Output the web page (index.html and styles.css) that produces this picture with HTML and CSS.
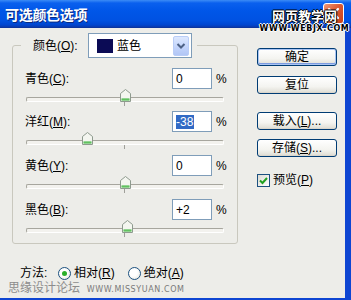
FILE: index.html
```html
<!DOCTYPE html>
<html lang="zh">
<head>
    <meta charset="UTF-8">
    <title>可选颜色选项</title>
    <link rel="stylesheet" href="styles.css">
</head>
<body>
<div class="window">
    <div class="titlebar">
        <span class="title">可选颜色选项</span>
        <span class="close-btn">
            <svg width="21" height="21" viewBox="0 0 21 21"><path d="M6 6 L15 15 M15 6 L6 15" stroke="#fff" stroke-width="2.2" stroke-linecap="round"/></svg>
        </span>
        <div class="site-mark">
            <span class="site-cn">网页教学网</span>
            <span class="site-en">WWW.WEBJX.COM</span>
        </div>
    </div>

    <div class="frame">
        <div class="main">
            <fieldset class="group">
                <legend class="color-pick">
                    <span class="pick-label">颜色(<u>O</u>):</span>
                    <span class="select">
                        <span class="swatch"></span>
                        <span class="select-text">蓝色</span>
                        <span class="drop">
                            <svg width="10" height="8" viewBox="0 0 10 8"><path d="M1.5 2 L5 5.5 L8.5 2" fill="none" stroke="#4D6185" stroke-width="2"/></svg>
                        </span>
                    </span>
                </legend>

                <div class="channel">
                    <div class="row">
                        <span class="label">青色(<u>C</u>):</span>
                        <span class="field">0</span>
                        <span class="pct">%</span>
                    </div>
                    <div class="slider">
                        <span class="track"></span>
                        <span class="tick"></span>
                        <span class="thumb" style="left: 95px"></span>
                    </div>
                </div>

                <div class="channel">
                    <div class="row">
                        <span class="label">洋红(<u>M</u>):</span>
                        <span class="field"><span class="selected">-38</span></span>
                        <span class="pct">%</span>
                    </div>
                    <div class="slider">
                        <span class="track"></span>
                        <span class="tick"></span>
                        <span class="thumb" style="left: 57px"></span>
                    </div>
                </div>

                <div class="channel">
                    <div class="row">
                        <span class="label">黄色(<u>Y</u>):</span>
                        <span class="field">0</span>
                        <span class="pct">%</span>
                    </div>
                    <div class="slider">
                        <span class="track"></span>
                        <span class="tick"></span>
                        <span class="thumb" style="left: 95px"></span>
                    </div>
                </div>

                <div class="channel">
                    <div class="row">
                        <span class="label">黑色(<u>B</u>):</span>
                        <span class="field">+2</span>
                        <span class="pct">%</span>
                    </div>
                    <div class="slider">
                        <span class="track"></span>
                        <span class="tick"></span>
                        <span class="thumb" style="left: 97px"></span>
                    </div>
                </div>
            </fieldset>

            <div class="method">
                <span class="method-label">方法:</span>
                <span class="radio on"></span>
                <span class="radio-text">相对(<u>R</u>)</span>
                <span class="radio second"></span>
                <span class="radio-text">绝对(<u>A</u>)</span>
            </div>

            <div class="credit">思缘设计论坛 <span class="credit-en">WWW.MISSYUAN.COM</span></div>
        </div>

        <div class="side">
            <button class="btn default">确定</button>
            <button class="btn reset">复位</button>
            <button class="btn load">载入(<u>L</u>)...</button>
            <button class="btn save">存储(<u>S</u>)...</button>
            <label class="check">
                <span class="box">
                    <svg width="11" height="11" viewBox="0 0 11 11"><path d="M2 5.5 L4.5 8 L9 3" fill="none" stroke="#21A121" stroke-width="2"/></svg>
                </span>
                <span>预览(<u>P</u>)</span>
            </label>
        </div>
    </div>
</div>
</body>
</html>
```

FILE: styles.css
```css
/* page */
body {
    margin: 0;
    font-family: "Liberation Sans", "Noto Sans CJK SC", sans-serif;
    font-size: 12px;
    color: #000;
}

u {
    text-decoration: underline;
    text-underline-offset: 1px;
}

/* window */
.window {
    width: 351px;
    height: 300px;
    display: flex;
    flex-direction: column;
    background: #EDEDE9;
    overflow: hidden;
}

/* title bar */
.titlebar {
    position: relative;
    height: 27px;
    flex-shrink: 0;
    display: flex;
    align-items: center;
    padding-left: 5px;
    background: linear-gradient(to bottom, #3C8CF6 0, #0A60EE 3px, #0056E8 40%, #0052E2 75%, #0046D0 92%, #0A3AAE 100%);
    border-bottom: 1px solid #0B35A0;
}

.title {
    color: #fff;
    font-family: "Noto Sans CJK SC", sans-serif;
    font-weight: bold;
    font-size: 14px;
    letter-spacing: -0.3px;
    text-shadow: 1px 1px 0 #0A2A80;
}

.close-btn {
    position: absolute;
    right: 7px;
    top: 3px;
    width: 21px;
    height: 21px;
    box-sizing: border-box;
    border: 1px solid #fff;
    border-radius: 3px;
    background: linear-gradient(135deg, #F09A78, #DC5A33 45%, #C8421A);
}

.close-btn svg {
    display: block;
    margin: -1px;
}

.site-mark {
    position: absolute;
    left: 268px;
    top: 9px;
    width: 73px;
    display: flex;
    flex-direction: column;
    align-items: center;
    line-height: 1;
}

.site-cn {
    font-family: "Noto Sans CJK SC", sans-serif;
    font-size: 13px;
    font-weight: bold;
    color: #fff;
    line-height: 14px;
    text-shadow: 1px 0 0 #000, -1px 0 0 #000, 0 1px 0 #000, 0 -1px 0 #000;
}

.site-en {
    margin-top: 2px;
    font-family: "DejaVu Sans", sans-serif;
    font-size: 8px;
    font-weight: bold;
    letter-spacing: 0.6px;
    color: #000;
    line-height: 8px;
    text-shadow: 1px 0 0 #fff, -1px 0 0 #fff, 0 1px 0 #fff, 0 -1px 0 #fff;
}

/* body of the dialog */
.frame {
    flex: 1;
    display: flex;
    border-right: 6px solid #0E45D2;
    border-bottom: 2px solid #0E45D2;
}

.main {
    width: 238px;
    padding-left: 12px;
    box-sizing: border-box;
}

/* group box */
.group {
    width: 226px;
    box-sizing: border-box;
    margin: 5px 0 0 0;
    padding: 10px 11px 0 12px;
    border: 1px solid #C9C8BE;
    border-radius: 3px;
}

.color-pick {
    display: flex;
    align-items: center;
    height: 25px;
    margin-left: -4px;
    padding: 0 5px 0 12px;
}

.pick-label {
    width: 55px;
    line-height: 14px;
}

.select {
    width: 104px;
    height: 25px;
    box-sizing: border-box;
    display: flex;
    align-items: center;
    padding: 0 2px 0 8px;
    background: #fff;
    border: 1px solid #7F9DB9;
}

.swatch {
    width: 16px;
    height: 14px;
    background: #0B0B55;
}

.select-text {
    margin-left: 4px;
    line-height: 14px;
}

.drop {
    margin-left: auto;
    width: 16px;
    height: 20px;
    box-sizing: border-box;
    display: flex;
    align-items: center;
    justify-content: center;
    border: 1px solid #B9CDF7;
    border-radius: 2px;
    background: linear-gradient(to bottom, #DDE8FE, #C1D3FB 60%, #B2C6F5);
}

/* one colour channel */
.channel {
    height: 44px;
}

.channel:first-of-type {
    height: 43px;
}

.row {
    display: flex;
    align-items: center;
    height: 21px;
}

.label {
    flex: 1;
    line-height: 14px;
}

.field {
    width: 40px;
    height: 21px;
    box-sizing: border-box;
    padding-left: 3px;
    display: flex;
    align-items: center;
    background: #fff;
    border: 1px solid #7F9DB9;
    line-height: 14px;
}

.selected {
    background: #316AC5;
    color: #fff;
    padding-right: 1px;
}

.pct {
    width: 14px;
    padding-left: 4px;
    box-sizing: border-box;
    line-height: 14px;
}

.slider {
    position: relative;
    height: 23px;
}

.track {
    position: absolute;
    left: 1px;
    right: 2px;
    top: 8px;
    height: 3px;
    border: 1px solid #A7A69E;
    border-bottom-color: #fff;
    border-right-color: #fff;
    border-radius: 2px;
    background: #F3F2EE;
}

.tick {
    position: absolute;
    left: 99px;
    top: 13px;
    width: 1px;
    height: 4px;
    background: #A0A09A;
}

.thumb {
    position: absolute;
    top: 0;
    width: 11px;
    height: 13px;
    background: url("data:image/svg+xml,%3Csvg xmlns='http://www.w3.org/2000/svg' width='11' height='13'%3E%3Cpath d='M0.5 4.5 L5.5 0.5 L10.5 4.5 V12.5 H0.5 Z' fill='%23F4F6F0' stroke='%238E9A8E'/%3E%3Cpath d='M1.5 11 H9.5 M1.5 10 H9.5' stroke='%2330B030'/%3E%3C/svg%3E") no-repeat;
}

/* method */
.method {
    display: flex;
    align-items: center;
    height: 12px;
    margin-top: 23px;
    padding-left: 8px;
    line-height: 12px;
}

.method-label {
    width: 38px;
}

.radio {
    width: 13px;
    height: 13px;
    box-sizing: border-box;
    border: 1px solid #1C5180;
    border-radius: 50%;
    background: radial-gradient(circle at 40% 40%, #fff 40%, #E0DFD6);
    display: flex;
    align-items: center;
    justify-content: center;
}

.radio.on::after {
    content: "";
    width: 5px;
    height: 5px;
    border-radius: 50%;
    background: #2AAF2A;
}

.radio.second {
    margin-left: 13px;
}

.radio-text {
    margin-left: 3px;
}

.credit {
    margin-left: -4px;
    height: 10px;
    line-height: 10px;
    margin-top: 3px;
    font-family: "Noto Sans CJK SC", sans-serif;
    font-size: 12px;
    color: #8C8C8C;
    white-space: nowrap;
}

.credit-en {
    margin-left: 4px;
    font-family: "DejaVu Sans", sans-serif;
    font-size: 8px;
    letter-spacing: 0.6px;
    color: #7A7A7A;
}

/* buttons on the right */
.side {
    margin-left: 19px;
    width: 80px;
    padding-top: 20px;
    display: flex;
    flex-direction: column;
}

.btn {
    height: 18px;
    padding: 0;
    font-family: "Liberation Sans", "Noto Sans CJK SC", sans-serif;
    font-size: 12px;
    line-height: 14px;
    color: #000;
    border: 1px solid #003C74;
    border-radius: 3px;
    background: linear-gradient(to bottom, #FFFFFF, #F4F4F0 60%, #E3E2DA 90%, #D6D0C5);
}

.btn.default {
    box-shadow: inset 0 0 0 1px #A9C4F4, inset 0 -1px 0 1px #7C9BE0;
}

.btn.reset {
    margin-top: 10px;
}

.btn.load {
    margin-top: 18px;
}

.btn.save {
    margin-top: 9px;
}

.check {
    display: flex;
    align-items: center;
    margin-top: 16px;
    line-height: 14px;
}

.box {
    width: 13px;
    height: 13px;
    box-sizing: border-box;
    border: 1px solid #1C5180;
    background: linear-gradient(135deg, #DCDBD3, #fff);
    display: flex;
    align-items: center;
    justify-content: center;
    margin-right: 3px;
}

.box svg {
    display: block;
}
```
